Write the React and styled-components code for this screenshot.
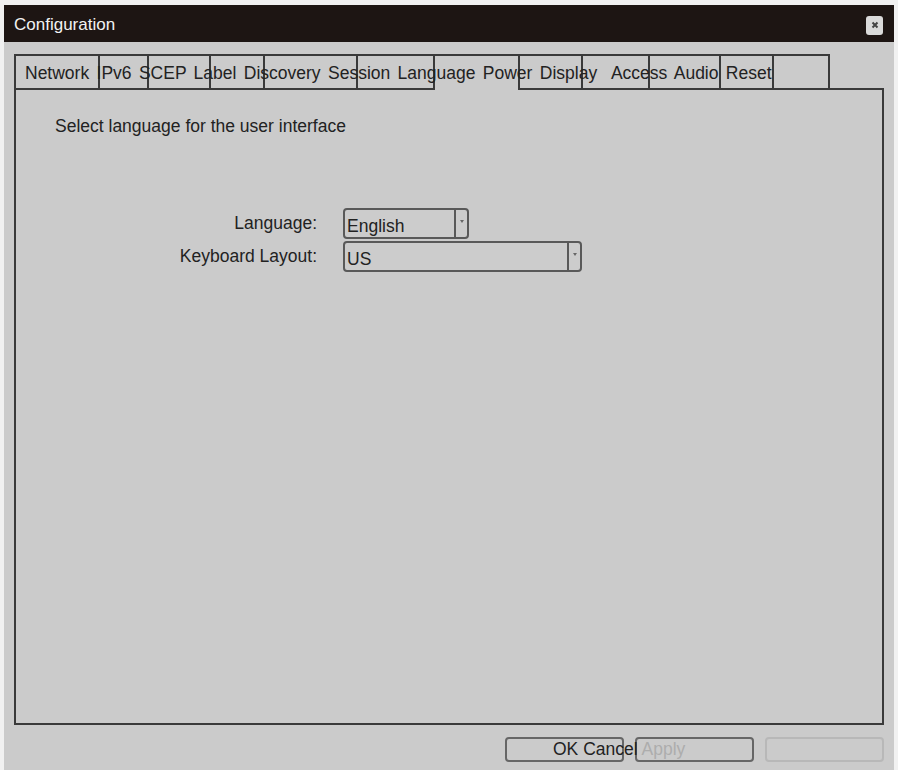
import React from 'react'
import styled, { createGlobalStyle } from 'styled-components'

const GlobalStyle = createGlobalStyle`
  html, body {
    margin: 0;
    padding: 0;
    background: #f1f1f1;
  }
  body {
    font-family: "Liberation Sans", Arial, sans-serif;
    color: #222;
  }
`

const tabEdges = [14, 98, 147, 209, 263, 356, 433, 518, 581, 648, 719, 772, 828]
const activeTab = 6

const Window = styled.div`
  margin: 5px 4px 0 4px;
  background: #cbcbcb;
  min-height: 765px;
  display: flex;
  flex-direction: column;
`

const TitleBar = styled.div`
  height: 37px;
  background: #1d1513;
  color: #f2f2f2;
  font-size: 17px;
  display: flex;
  align-items: center;
  justify-content: space-between;
  padding: 2px 11px 0 10px;
  box-sizing: border-box;
`

const CloseButton = styled.div`
  width: 17px;
  height: 19px;
  margin-top: 1px;
  border-radius: 3px;
  background: #dadada;
  display: flex;
  align-items: center;
  justify-content: center;
`

const Body = styled.div`
  padding: 12px 10px 0 10px;
  display: flex;
  flex-direction: column;
  flex: 1;
`

const TabStrip = styled.div`
  position: relative;
  height: 34px;
  display: flex;
  align-items: flex-start;
`

const TabBox = styled.div`
  box-sizing: border-box;
  flex: none;
  height: ${p => (p.active ? '36px' : '34px')};
  border-top: 2px solid #3a3a3a;
  border-left: 2px solid #3a3a3a;
  border-right: ${p => (p.last ? '2px solid #3a3a3a' : 'none')};
  background: #cbcbcb;
  position: relative;
  z-index: ${p => (p.active ? 1 : 0)};
`

const TabLabels = styled.div`
  position: absolute;
  left: 11px;
  top: 2px;
  line-height: 34px;
  font-size: 17.5px;
  word-spacing: 2.5px;
  white-space: pre;
  color: #222;
  z-index: 2;
  pointer-events: none;
`

const Panel = styled.div`
  box-sizing: border-box;
  height: 637px;
  border: 2px solid #3a3a3a;
  padding: 26px 0 0 0;
`

const Intro = styled.div`
  font-size: 17.5px;
  line-height: 20px;
  padding-left: 39px;
`

const Form = styled.div`
  margin-top: 72px;
  display: grid;
  grid-template-columns: 301px auto;
  column-gap: 26px;
  row-gap: 2px;
  align-items: center;
  justify-content: start;
`

const Label = styled.div`
  justify-self: end;
  font-size: 17.5px;
`

const Select = styled.div`
  box-sizing: border-box;
  width: ${p => p.width}px;
  height: 31px;
  border: 2px solid #595959;
  border-radius: 4px;
  display: flex;
  align-items: stretch;
  background: #cccccc;
`

const SelectValue = styled.div`
  flex: 1;
  font-size: 17.5px;
  padding: 6px 0 0 2px;
  color: #222;
`

const SelectArrow = styled.div`
  width: 13px;
  border-left: 2px solid #595959;
  display: flex;
  justify-content: center;
  padding-top: 10px;
  box-sizing: border-box;
`

const Footer = styled.div`
  position: relative;
  padding: 12px 0 8px 0;
  display: flex;
  justify-content: flex-end;
  gap: 11px;
`

const Button = styled.div`
  box-sizing: border-box;
  width: 119px;
  height: 25px;
  border: 2px solid ${p => (p.faded ? '#b8b8b8' : '#666')};
  border-radius: 4px;
`

const ButtonLabels = styled.div`
  position: absolute;
  left: 539px;
  top: 12px;
  line-height: 25px;
  font-size: 17.5px;
  white-space: pre;
  color: #222;
`

const Dim = styled.span`
  color: #adadad;
`

const tabs = tabEdges.slice(0, -1).map((x, i) => ({
  width: tabEdges[i + 1] - x + (i === tabEdges.length - 2 ? 2 : 0),
  active: i === activeTab,
  last: i === tabEdges.length - 2,
}))

export default function App() {
  return (
    <>
      <GlobalStyle />
      <Window>
        <TitleBar>
          <span>Configuration</span>
          <CloseButton>
            <svg width="8" height="8" viewBox="0 0 8 8">
              <path d="M1.5 1.5L6.5 6.5M6.5 1.5L1.5 6.5" stroke="#444" strokeWidth="2" />
            </svg>
          </CloseButton>
        </TitleBar>
        <Body>
          <TabStrip>
            {tabs.map((t, i) => (
              <TabBox key={i} style={{ width: t.width }} active={t.active} last={t.last} />
            ))}
            <TabLabels>
              {'Network IPv6 SCEP Label Discovery Session Language Power Display  Access Audio Reset'}
            </TabLabels>
          </TabStrip>
          <Panel>
            <Intro>Select language for the user interface</Intro>
            <Form>
              <Label>Language:</Label>
              <Select width={126}>
                <SelectValue>English</SelectValue>
                <SelectArrow>
                  <svg width="4" height="3" viewBox="0 0 4 3">
                    <path d="M0 0H4L2 3Z" fill="#666" />
                  </svg>
                </SelectArrow>
              </Select>
              <Label>Keyboard Layout:</Label>
              <Select width={239}>
                <SelectValue>US</SelectValue>
                <SelectArrow>
                  <svg width="4" height="3" viewBox="0 0 4 3">
                    <path d="M0 0H4L2 3Z" fill="#666" />
                  </svg>
                </SelectArrow>
              </Select>
            </Form>
          </Panel>
          <Footer>
            <Button />
            <Button />
            <Button faded />
            <ButtonLabels>
              OK Cancel <Dim>Apply</Dim>
            </ButtonLabels>
          </Footer>
        </Body>
      </Window>
    </>
  )
}
